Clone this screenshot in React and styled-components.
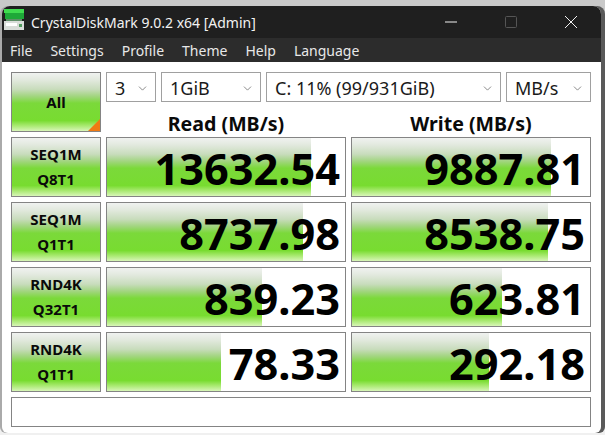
import React from "react";
import styled, { createGlobalStyle } from "styled-components";
import { ChevronDown } from "lucide-react";

const FONT = `"Noto Sans", "Open Sans", "Liberation Sans", sans-serif`;

const GREEN_GRADIENT = `linear-gradient(
  to bottom,
  #f0f2f0 0%,
  #e2e9de 12%,
  #c8dcbc 28%,
  #a2d580 40%,
  #7bd93a 52%,
  #78dc30 82%,
  #a4e86a 90%,
  #d8f6b8 100%
)`;

const GlobalStyle = createGlobalStyle`
  html, body {
    margin: 0;
    padding: 0;
    background: #f0f0f0;
    overflow: hidden;
  }
`;

const Desktop = styled.div`
  width: 605px;
  height: 435px;
  padding: 6px 4px 2px 2px;
  box-sizing: border-box;
  background: linear-gradient(to bottom, #c9c9c9 0, #c9c9c9 14px, #f0f0f0 14px);
  font-family: ${FONT};
`;

const Window = styled.div`
  height: 427px;
  background: #fff;
  border-radius: 8px 8px 6px 6px;
  box-shadow: 4px 0 0 #5a5a5a, -2px 0 0 #aaa;
  overflow: hidden;
  display: flex;
  flex-direction: column;
`;

const TitleBar = styled.div`
  height: 32px;
  background: #1f1f1f;
  display: flex;
  align-items: center;
  color: #f2f2f2;
  font-size: 14px;
`;

const Logo = styled.svg`
  width: 22px;
  height: 24px;
  margin: -4px 5px 0 2px;
  flex: none;
`;

const Title = styled.span`
  flex: 1;
`;

const WinButton = styled.div`
  width: 60px;
  height: 32px;
  display: flex;
  align-items: center;
  justify-content: center;
`;

const MenuBar = styled.div`
  height: 24px;
  background: #2c2c2c;
  display: flex;
  align-items: center;
  padding-left: 8px;
  gap: 18px;
  color: #e8e8e8;
  font-size: 14px;
`;

const Panel = styled.div`
  display: grid;
  grid-template-columns: 90px 240px 240px;
  grid-template-rows: 30px 25px repeat(4, 60px) 30px;
  gap: 5px;
  padding: 10px 0 0 9px;
`;

const TestButton = styled.div`
  position: relative;
  grid-row: ${(p) => (p.$tall ? "span 2" : "auto")};
  box-sizing: border-box;
  border: 1px solid #848484;
  background: ${GREEN_GRADIENT};
  display: flex;
  flex-direction: column;
  align-items: center;
  justify-content: center;
  color: #0a0a0a;
  font-size: 15px;
  font-weight: 700;
  line-height: 25px;
`;

const Corner = styled.div`
  position: absolute;
  right: 0;
  bottom: 0;
  width: 0;
  height: 0;
  border-style: solid;
  border-width: 0 0 12px 12px;
  border-color: transparent transparent #f07a14 transparent;
`;

const ComboRow = styled.div`
  grid-column: span 2;
  display: flex;
  gap: 5px;
`;

const Combo = styled.div`
  width: ${(p) => p.$width}px;
  box-sizing: border-box;
  border: 1px solid #a0a0a0;
  background: #fff;
  display: flex;
  align-items: center;
  justify-content: space-between;
  padding: 2px 6px 0 8px;
  color: #1a1a1a;
  font-size: 18px;
  white-space: nowrap;
`;

const ColumnHead = styled.div`
  text-align: center;
  color: #0a0a0a;
  font-size: 19.6px;
  font-weight: 700;
  line-height: 34px;
`;

const Score = styled.div`
  box-sizing: border-box;
  border: 1px solid #848484;
  background: ${GREEN_GRADIENT} no-repeat;
  background-size: ${(p) => p.$bar}px 100%;
  text-align: right;
  padding-right: 5px;
  color: #000;
  font-size: 43.3px;
  font-weight: 700;
  line-height: 61px;
  white-space: nowrap;
`;

const Message = styled.div`
  grid-column: span 3;
  border: 1px solid #848484;
`;

const rows = [
  { id: "SEQ1M", sub: "Q8T1", read: "13632.54", readBar: 204, write: "9887.81", writeBar: 199 },
  { id: "SEQ1M", sub: "Q1T1", read: "8737.98", readBar: 196, write: "8538.75", writeBar: 196 },
  { id: "RND4K", sub: "Q32T1", read: "839.23", readBar: 155, write: "623.81", writeBar: 150 },
  { id: "RND4K", sub: "Q1T1", read: "78.33", readBar: 114, write: "292.18", writeBar: 137 },
];

const combos = [
  { label: "3", width: 50 },
  { label: "1GiB", width: 100 },
  { label: "C: 11% (99/931GiB)", width: 235 },
  { label: "MB/s", width: 85 },
];

const menus = ["File", "Settings", "Profile", "Theme", "Help", "Language"];

export default function App() {
  return (
    <>
      <GlobalStyle />
      <Desktop>
        <Window>
          <TitleBar>
            <Logo viewBox="0 0 22 24">
              <rect x="0" y="1" width="20" height="4" fill="#3fdc4f" />
              <rect x="1" y="5" width="19" height="6" fill="#1ea838" />
              <rect x="2" y="11" width="16" height="2" fill="#5f8f68" />
              <rect x="0" y="13" width="20" height="9" fill="#d8dcd8" />
              <rect x="2" y="15" width="11" height="3" fill="#ffffff" />
              <rect x="15" y="16" width="3" height="3" fill="#4f9a5c" />
            </Logo>
            <Title>CrystalDiskMark 9.0.2 x64 [Admin]</Title>
            <WinButton>
              <svg width="14" height="14" viewBox="0 0 14 14">
                <path d="M1 7h12" stroke="#f2f2f2" strokeWidth="1" />
              </svg>
            </WinButton>
            <WinButton>
              <svg width="14" height="14" viewBox="0 0 14 14">
                <rect x="1.5" y="1.5" width="11" height="11" rx="1" fill="none" stroke="#555" />
              </svg>
            </WinButton>
            <WinButton>
              <svg width="14" height="14" viewBox="0 0 14 14">
                <path d="M1 1l12 12M13 1L1 13" stroke="#f2f2f2" strokeWidth="1" />
              </svg>
            </WinButton>
          </TitleBar>
          <MenuBar>
            {menus.map((m) => (
              <span key={m}>{m}</span>
            ))}
          </MenuBar>
          <Panel>
            <TestButton $tall>
              All
              <Corner />
            </TestButton>
            <ComboRow>
              {combos.map((c) => (
                <Combo key={c.label} $width={c.width}>
                  {c.label}
                  <ChevronDown size={13} color="#707070" strokeWidth={1.5} />
                </Combo>
              ))}
            </ComboRow>
            <ColumnHead>Read (MB/s)</ColumnHead>
            <ColumnHead>Write (MB/s)</ColumnHead>
            {rows.map((r) => (
              <React.Fragment key={r.id + r.sub}>
                <TestButton>
                  <span>{r.id}</span>
                  <span>{r.sub}</span>
                </TestButton>
                <Score $bar={r.readBar}>{r.read}</Score>
                <Score $bar={r.writeBar}>{r.write}</Score>
              </React.Fragment>
            ))}
            <Message />
          </Panel>
        </Window>
      </Desktop>
    </>
  );
}
